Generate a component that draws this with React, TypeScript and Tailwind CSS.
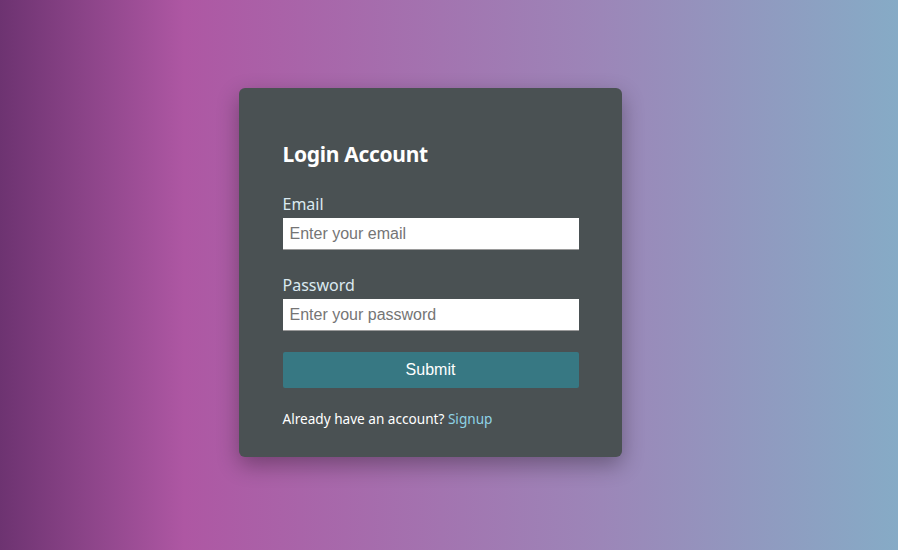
export default function App() {
  return (
    <div className="w-full h-[550px] flex items-start justify-center bg-[linear-gradient(to_right,#6d3371_0%,#ae57a3_20.5%,#9c86b8_67%,#86abc6_100%)]">
      <div className="mt-[88px] mr-[38px] w-[383px] h-[369px] rounded-[6px] bg-[#4a5153] shadow-[0_8px_22px_rgba(0,0,0,0.32)] px-[44px] pt-[54px] flex flex-col">
        <h2 className="text-[21px] font-bold leading-[24px] text-white font-['Noto_Sans',sans-serif] tracking-[-0.3px]">
          Login Account
        </h2>

        <label className="mt-[26px] text-[16px] leading-[24px] text-[#dbe9f0] font-['Noto_Sans',sans-serif]">
          Email
        </label>
        <input
          type="email"
          placeholder="Enter your email"
          className="mt-[2px] h-[32px] w-[296px] bg-white px-[7px] text-[16px] text-[#333] placeholder:text-[#757575] border-b border-[#9a9a9a] outline-none font-['Liberation_Sans',Arial,sans-serif]"
        />

        <label className="mt-[23px] text-[16px] leading-[24px] text-[#dbe9f0] font-['Noto_Sans',sans-serif]">
          Password
        </label>
        <input
          type="password"
          placeholder="Enter your password"
          className="mt-[2px] h-[32px] w-[296px] bg-white px-[7px] text-[16px] text-[#333] placeholder:text-[#757575] border-b border-[#9a9a9a] outline-none font-['Liberation_Sans',Arial,sans-serif]"
        />

        <button className="mt-[21px] h-[36px] w-[296px] rounded-[2px] bg-[#377883] text-white text-[16px] font-['Liberation_Sans',Arial,sans-serif]">
          Submit
        </button>

        <p className="mt-[21px] text-[13.6px] leading-[20px] text-white font-['Noto_Sans',sans-serif]">
          Already have an account? <a className="text-[#8fd3e6]">Signup</a>
        </p>
      </div>
    </div>
  );
}
